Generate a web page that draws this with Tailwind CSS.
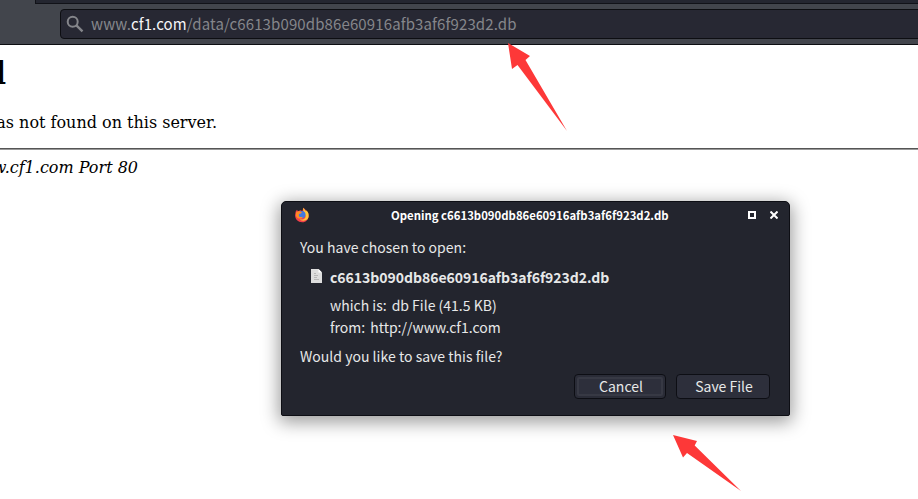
<!DOCTYPE html>
<html lang="en">
<head>
<meta charset="utf-8">
<title>404 Not Found</title>
<script src="https://cdn.jsdelivr.net/npm/@tailwindcss/browser@4"></script>
</head>
<body class="relative h-[499px] w-[918px] overflow-hidden bg-white font-['Noto_Sans_CJK_SC',sans-serif]">
<header class="flex h-[45px] flex-col border-b border-[#0d0e12] bg-[#42454c]">
  <div class="ml-[35px] h-1 shrink-0 border-b border-l border-[#111218] bg-[#242630]"></div>
  <div class="mt-[5px] ml-[60px] flex h-[30px] w-[870px] items-center rounded-[4px] border border-[#0d0e12] bg-[#272833] pl-[5px]">
    <svg class="size-[18px] shrink-0" viewBox="0 0 18 18" fill="none" stroke="#85868b" stroke-width="2"><circle cx="6.7" cy="6.7" r="5"/><path d="M10.4 10.4 16.5 16.3" stroke-width="2.4"/></svg>
    <p class="ml-[7px] whitespace-pre text-[15px] leading-[22px] tracking-[0.12px] text-[#85868b]">www.<span class="text-[#f5f5f6]">cf1.com</span>/data/c6613b090db86e60916afb3af6f923d2.db</p>
  </div>
</header>
<main class="font-['DejaVu_Serif',serif] text-black">
  <h1 class="flex h-[57px] w-[6px] justify-end pt-[9px] text-[32px] leading-[38px] font-bold whitespace-nowrap">d</h1>
  <p class="flex h-[46px] w-[217px] justify-end pt-[11px] text-[16px] leading-[19px] whitespace-nowrap">as not found on this server.</p>
  <hr class="h-[2px] border-t border-b border-t-[#555] border-b-[#999]">
  <address class="flex w-[138px] justify-end pt-[8px] text-[16px] leading-[19px] whitespace-nowrap">w.cf1.com Port 80</address>
</main>
<section class="absolute top-[201px] left-[281px] flex h-[215px] w-[509px] flex-col rounded-t-[5px] rounded-b-[2px] border border-[#0d0e14] bg-[#23252e] text-[14px] text-[#e7e8e8] shadow-[0_4px_18px_2px_rgba(0,0,0,0.4)]">
  <div class="flex h-[26px] items-center pr-[11px] pl-[12px] text-white">
    <svg class="size-4 shrink-0" viewBox="0 0 16 16"><path d="M1.1 8.1 1.7 4.5 3 2.7 4 4.5 6.2 3.2 8.4 4 9.4.8 11.2 2.5 14 5.5C16.1 10.5 13.2 15.3 8.2 15.3 3.9 15.3 1 12 1.1 8.1Z" fill="#f5404a"/><path d="M9.4.8C8.6 4 10.2 4.7 11.4 8.2 12.4 11.6 9.2 13 5.6 12.5 10.5 15.5 14.7 12.6 14.6 8.8 14.8 5.5 13.3 4.4 12.4 3.4L11.7 4Z" fill="#ffc53a"/><circle cx="7.8" cy="7.6" r="3.7" fill="#4278e0"/><path d="M2.2 5.2 5 4 8 5.3 6.8 6.5 5 7.1 4.8 9C5.3 10.5 7.5 10.1 9 9.8 7.5 12.8 3 12 1.8 8.4Z" fill="#ff8b24"/></svg>
    <h2 class="ml-[81px] w-[278px] shrink-0 whitespace-nowrap text-[11.36px] leading-[16px] font-bold">Opening c6613b090db86e60916afb3af6f923d2.db</h2>
    <span class="ml-auto size-2 shrink-0 border-2 border-white"></span>
    <svg class="ml-[14px] size-2 shrink-0" viewBox="0 0 8 8" stroke="white" stroke-width="2"><path d="m.5.5 7 7m0-7-7 7"/></svg>
  </div>
  <div class="flex h-[146px] flex-col pt-[8px] pl-[18px] whitespace-nowrap">
    <p class="h-[30px] leading-[22px] tracking-[0.02px]">You have chosen to open:</p>
    <div class="flex h-[28px] items-start pl-[11px]">
      <svg class="mt-[3px] h-[14px] w-[11px]" viewBox="0 0 11 14"><path d="M0 0h7.5L11 3.5V14H0Z" fill="#dedede"/><path d="M7.5 0v3.5H11Z" fill="#fff"/><path d="M3 4.5h2M3 6.5h4M3 8.5h3M3 10.5h5" stroke="#b8b8b8"/></svg>
      <p class="ml-2 leading-[22px] font-bold tracking-[-0.03px]">c6613b090db86e60916afb3af6f923d2.db</p>
    </div>
    <p class="h-[22px] pl-[30px] leading-[22px]">which is:<span class="ml-[5px]">db File (41.5 KB)</span></p>
    <p class="h-[29px] pl-[30px] leading-[22px]">from:<span class="ml-[5px]">http://www.cf1.com</span></p>
    <p class="h-[27px] leading-[22px] tracking-[0.02px]">Would you like to save this file?</p>
  </div>
  <div class="flex justify-end gap-[10px] pr-[19px]">
    <button class="flex h-[25px] w-[92px] rounded-[4px] border border-[#0d0e14] bg-[#2a2c37] p-[2px]"><span class="flex size-full items-center justify-center rounded-[2px] border-2 border-[#373944] bg-[#2d2f3b] pb-[2px] pl-[2px] leading-[18px]">Cancel</span></button>
    <button class="flex h-[25px] w-[94px] items-center justify-center rounded-[4px] border border-[#0d0e14] bg-[#2d2f3b] pb-[2px] pl-[2px] leading-[20px]">Save File</button>
  </div>
</section>
<svg class="absolute top-[42px] left-[507px] h-[90px] w-[61px]" viewBox="507 42 61 90" fill="#fd3838"><path d="m508 43 22 13-4.5 4L567 131 517.5 65l-5.5 4Z"/></svg>
<svg class="absolute top-[434px] left-[672px] h-[58px] w-[70px]" viewBox="672 434 70 58" fill="#fd3838"><path d="m673 435 24 6-2.3 4.5L741 491 687 453l-4 4.5Z"/></svg>
</body>
</html>
